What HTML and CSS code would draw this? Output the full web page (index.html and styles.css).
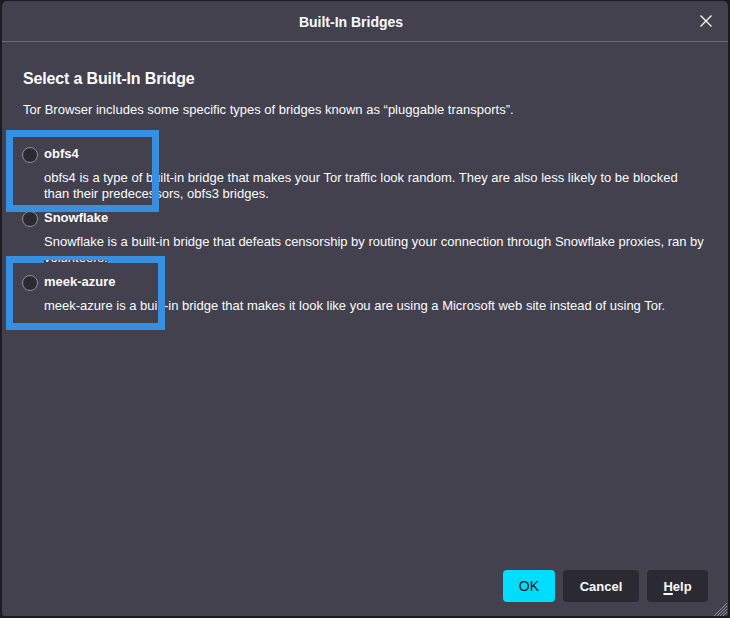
FILE: index.html
```html
<!DOCTYPE html>
<html lang="en">
<head>
<meta charset="utf-8">
<title>Built-In Bridges</title>
<link rel="stylesheet" href="styles.css">
</head>
<body>
<div class="dialog">
  <header class="dlg-header">
    <h1 class="dlg-title">Built-In Bridges</h1>
    <button class="close" aria-label="Close">
      <svg width="12" height="12" viewBox="0 0 12 12"><path d="M0.5 0.5 L11.5 11.5 M11.5 0.5 L0.5 11.5" stroke="#fbfbfe" stroke-width="1.3" fill="none"/></svg>
    </button>
  </header>
  <main class="content">
    <h2 class="heading">Select a Built-In Bridge</h2>
    <p class="intro">Tor Browser includes some specific types of bridges known as “pluggable transports”.</p>
    <div class="options">
      <div class="option">
        <label class="opt-row"><span class="radio"></span><span class="opt-label">obfs4</span></label>
        <p class="opt-desc">obfs4 is a type of built-in bridge that makes your Tor traffic look random. They are also less likely to be blocked<br>than their predecessors, obfs3 bridges.</p>
      </div>
      <div class="option">
        <label class="opt-row"><span class="radio"></span><span class="opt-label">Snowflake</span></label>
        <p class="opt-desc">Snowflake is a built-in bridge that defeats censorship by routing your connection through Snowflake proxies, ran by<br><span class="cut">volunteers.</span></p>
      </div>
      <div class="option">
        <label class="opt-row"><span class="radio"></span><span class="opt-label">meek-azure</span></label>
        <p class="opt-desc">meek-azure is a built-in bridge that makes it look like you are using a Microsoft web site instead of using Tor.</p>
      </div>
    </div>
  </main>
  <footer class="dlg-footer">
    <button class="btn btn-primary">OK</button>
    <button class="btn">Cancel</button>
    <button class="btn"><u>H</u>elp</button>
  </footer>
  <svg class="grip" width="15" height="14" viewBox="0 0 15 14">
    <path d="M14 1 L1 14 M14 4 L4 14 M14 7 L7 14 M14 10 L10 14" stroke="#8f8f9d" stroke-width="1" fill="none"/>
  </svg>
</div>
<div class="mark mark-1"></div>
<div class="mark mark-2"></div>
</body>
</html>
```
FILE: styles.css
```css
html, body {
  margin: 0;
  padding: 0;
}
body {
  width: 730px;
  height: 618px;
  background: #1c1b22;
  font-family: "Liberation Sans", Arial, sans-serif;
  color: #fbfbfe;
  overflow: hidden;
  position: relative;
}
.dialog {
  margin: 1px 2px 0 2px;
  height: 615px;
  background: #42414d;
  border-radius: 5px 5px 2px 3px;
  display: flex;
  flex-direction: column;
  position: relative;
}
.dlg-header {
  height: 40px;
  border-bottom: 1px solid #6b6a74;
  display: flex;
  align-items: center;
}
.dlg-title {
  flex: 1;
  text-align: center;
  margin: 0;
  font-size: 14px;
  font-weight: bold;
  line-height: 18px;
  padding-top: 1px;
}
.close {
  margin-right: 16px;
  padding: 0;
  border: 0;
  background: none;
  width: 12px;
  height: 12px;
  display: flex;
}
.content {
  padding: 27px 20px 0 20px;
  flex: 1;
}
.heading {
  margin: 0 0 0 1px;
  font-size: 16px;
  line-height: 20px;
  font-weight: bold;
  letter-spacing: -0.15px;
}
.intro {
  margin: 12px 0 0 1px;
  font-size: 13px;
  line-height: 17px;
}
.options {
  margin-top: 28px;
  display: flex;
  flex-direction: column;
  gap: 8px;
}
.opt-row {
  display: flex;
  align-items: center;
  gap: 6px;
  height: 16px;
}
.radio {
  width: 16px;
  height: 16px;
  box-sizing: border-box;
  border-radius: 50%;
  border: 1px solid #8f8f9d;
  background: #2b2a33;
  flex: none;
  margin-top: 1px;
}
.opt-label {
  font-size: 13px;
  font-weight: bold;
  line-height: 16px;
}
.opt-desc {
  margin: 7px 0 0 22px;
  font-size: 13px;
  line-height: 16px;
  white-space: nowrap;
  padding-top: 1px;
}
.cut {
  display: inline-block;
  position: relative;
  z-index: 3;
  background: #42414d;
  clip-path: inset(10px 0 1px 0);
}
.dlg-footer {
  display: flex;
  justify-content: flex-end;
  gap: 8px;
  padding: 0 20px 14px 0;
}
.btn {
  height: 32px;
  border: 0;
  border-radius: 4px;
  background: #2b2a33;
  color: #fbfbfe;
  font-family: "Liberation Sans", Arial, sans-serif;
  font-size: 13px;
  font-weight: bold;
  padding: 0 16px;
  min-width: 51px;
}
.btn-primary {
  background: #00ddff;
  color: #15141a;
  font-weight: normal;
  font-size: 14px;
}
.btn:nth-child(2) { width: 76px; }
.btn:nth-child(3) { width: 61px; }
.btn u { text-decoration-thickness: 2px; text-underline-offset: 2px; }
.grip {
  position: absolute;
  right: 0;
  bottom: 0;
}
.mark {
  position: absolute;
  z-index: 2;
  border: 7px solid #368fe0;
  box-sizing: border-box;
  left: 6px;
}
.mark-1 {
  top: 130px;
  width: 153px;
  height: 82px;
}
.mark-2 {
  top: 256px;
  width: 159px;
  height: 74px;
}
```
